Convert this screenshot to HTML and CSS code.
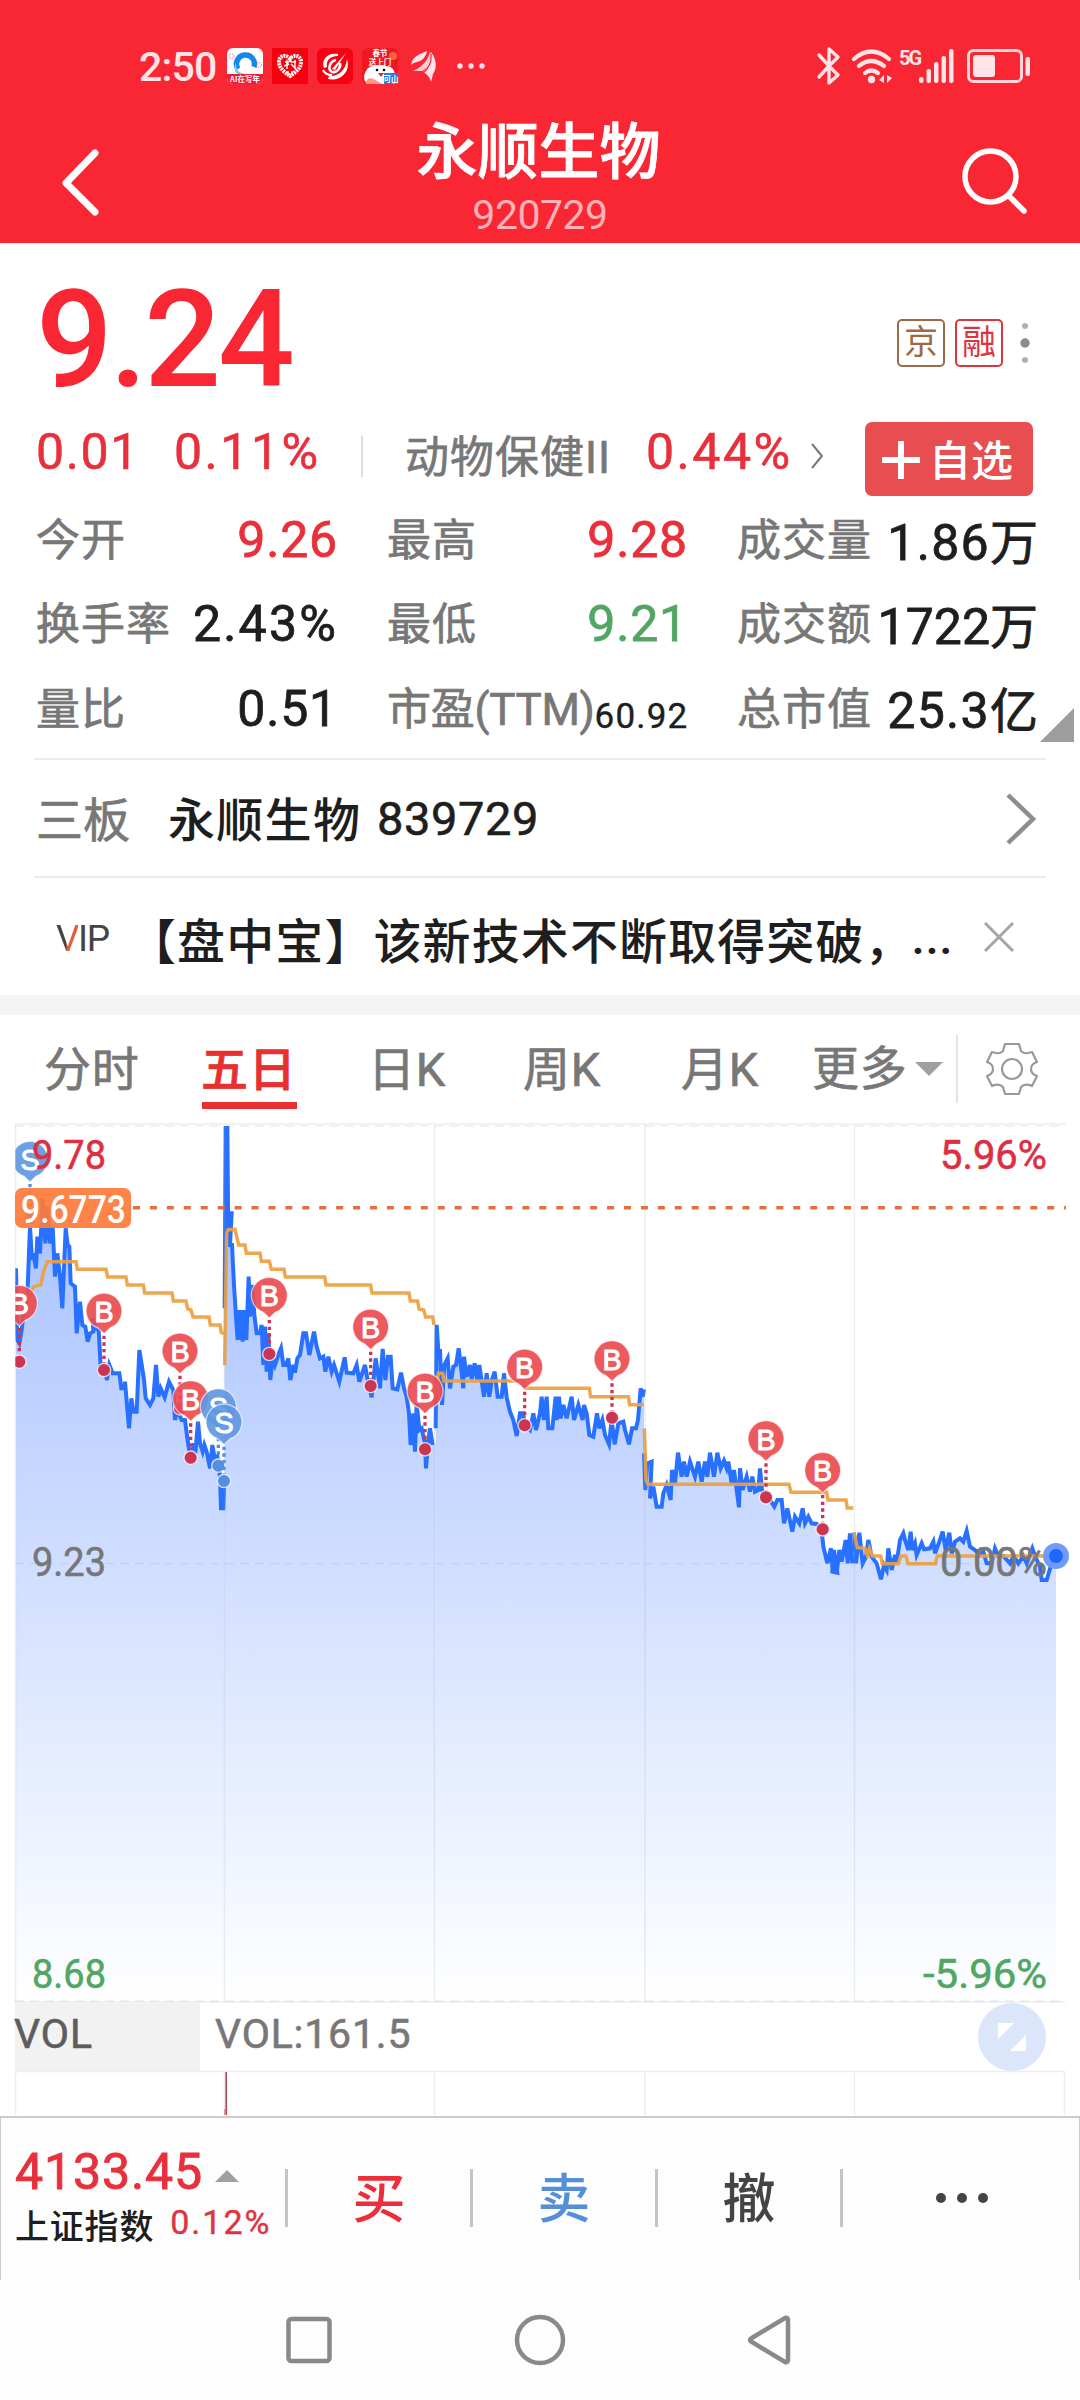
FILE: index.html
```html
<!DOCTYPE html>
<html lang="zh-CN">
<head>
<meta charset="utf-8">
<title>永顺生物 920729</title>
<link rel="stylesheet" href="styles.css">
</head>
<body>
<header class="header">
  <div class="status">
    <span class="clock">2:50</span>
    <svg class="app-icon" viewBox="0 0 36 36"><rect width="36" height="36" rx="6" fill="#fff"/><path d="M0 26H36V30a6 6 0 0 1-6 6H6a6 6 0 0 1-6-6Z" fill="#f01c35"/><path d="M11 21A9 9 0 1 1 27 19" fill="none" stroke="#1588f0" stroke-width="5.500"/><path d="M9 15c0 6 2 10 9 11h-8c-3-3-3-8-1-11Z" fill="#7cc8fa"/><circle cx="4.500" cy="8" r="2.500" fill="none" stroke="#f5a" stroke-dasharray="1 1"/><circle cx="32" cy="17" r="2.500" fill="none" stroke="#f5a" stroke-dasharray="1 1"/><text x="18" y="34" class="micro tiny">AI在写年</text></svg>
    <svg class="app-icon" viewBox="0 0 36 36"><rect width="36" height="36" fill="#f6000f"/><path d="M18 11C15 6 7 7 7 14c0 7 7 11 11 14 4-3 11-7 11-14 0-7-8-8-11-3Z" fill="none" stroke="#fff" stroke-width="4" stroke-dasharray="2 .8"/><path d="M13 14h4m2 0h5m-9-2v9m-3-3 5-2m6-4v9m-4-5 5 5m-8 2v4m4-4v4" stroke="#fff" stroke-width="1.400" fill="none"/></svg>
    <svg class="app-icon" viewBox="0 0 36 36"><rect width="36" height="36" rx="6" fill="#f90013"/><g fill="#fff"><path d="M21 6C10 4 4 12 7 20l3-1C9 13 12 8 21 8ZM30 11c4 12-6 23-19 20l1-3c9 1 17-6 18-17Z"/><path d="m29 5-11 17-3-1Z"/></g><g fill="none" stroke="#fff"><path d="M19 12c-6 1-9 9-4 12 5 1 9-4 8-9" stroke-width="2.600"/><path d="M6 22c2 4 5 5 9 5" stroke-width="2"/></g></svg>
    <svg class="app-icon" viewBox="0 0 36 36"><rect width="36" height="36" rx="6" fill="#ef1820"/><circle cx="31" cy="8" r="4" fill="#ff6042"/><path d="M2 28q3-11 10-10 6-2 12 0 8 0 9 9v9H8q-6 0-6-8" fill="#fff"/><path d="M4 36q0-8 8-5l8 5Z" fill="#ff987e"/><circle cx="15" cy="22" r="1.300"/><circle cx="22" cy="22" r="1.300"/><path d="M16 25h6l-3 4Z" fill="#d52b29"/><path d="M22 25h14v5a6 6 0 0 1-6 6h-8Z" fill="#2c79e8"/><text x="18" y="8" class="micro tiny">春节</text><text x="18" y="16.500" class="micro tiny">送上门</text><text x="29" y="33.500" class="micro tiny">可山</text></svg>
    <svg class="wing" viewBox="0 0 28 32" fill="#ffe3e6"><path d="M0 15C1 7 8 4 16 1c-1 6-5 10-10 11-3 1-4 1-6 3Z"/><path d="M2 21C13 16 17 9 19 1c3 9 0 16-8 20-3 0-6 0-9 0Z" opacity=".88"/><path d="M12 22C18 17 21 10 20 2c6 8 6 16 2 22l-2 8c-1-5-4-8-8-10Z"/><path d="M3 19C12 15 16 10 18 2M11 24c8-6 10-12 9-20" fill="none" stroke="#f92734" stroke-width="1.200"/></svg>
    <svg class="dots" viewBox="0 0 28 6" fill="#ffe3e6"><circle cx="3" cy="3" r="2.700"/><circle cx="14" cy="3" r="2.700"/><circle cx="25" cy="3" r="2.700"/></svg>
    <svg class="bt" viewBox="0 0 24 38" fill="none" stroke="#ffe3e6" stroke-width="3.400" stroke-linejoin="round" stroke-linecap="round"><path d="M2 8l10 11V2l9 8-9 9L2 30M12 22v14l9-8-7-7"/></svg>
    <svg class="wifi" viewBox="0 0 42 36" fill="none" stroke="#ffe3e6" stroke-width="4.200" stroke-linecap="round"><path d="M3 10q17-15 35 0M8 17q12-10 25 0M14 24q6-5 13 0"/><circle cx="20.500" cy="30.500" r="1.600" fill="#ffe3e6"/><path d="M28 31l5-5v8Zm8-5v8l5-5Z" fill="#ffe3e6" stroke="none"/></svg>
    <span class="five-g">5G</span>
    <svg class="signal" viewBox="0 0 36 34" fill="#ffe3e6"><rect y="28" width="4.500" height="6" rx="2"/><rect x="7.500" y="20" width="4.500" height="14" rx="2"/><rect x="15" y="13" width="4.500" height="21" rx="2"/><rect x="22.500" y="7" width="4.500" height="27" rx="2"/><rect x="30" width="4.500" height="34" rx="2"/></svg>
    <svg class="battery" viewBox="0 0 64 34"><rect x="1.500" y="1.500" width="53" height="31" rx="5" fill="none" stroke="#ffd3d8" stroke-width="3"/><rect x="6" y="6" width="22" height="22" rx="3" fill="#ffe3e6"/><rect x="58.500" y="8" width="4.500" height="19" rx="2" fill="#ffe3e6"/></svg>
  </div>
  <div class="titlebar">
    <svg class="back" viewBox="0 0 40 68" fill="none" stroke="#fff" stroke-width="7" stroke-linecap="round" stroke-linejoin="round"><path d="M34 4 5 34l29 29"/></svg>
    <div class="title"><h1>永顺生物</h1><span>920729</span></div>
    <svg class="search" viewBox="0 0 66 66" fill="none" stroke="#fff" stroke-width="5.500" stroke-linecap="round"><circle cx="28.500" cy="28.500" r="25.500"/><path d="m47 48 15 15"/></svg>
  </div>
</header>

<section class="quote">
  <div class="price-row">
    <strong class="price">9.24</strong>
    <span class="badge jing">京</span><span class="badge rong">融</span>
    <svg class="kebab" viewBox="0 0 10 42" fill="#b0b0b0"><circle cx="5" cy="4" r="3"/><circle cx="5" cy="21" r="4.700" fill="#8c8c8c"/><circle cx="5" cy="38" r="3"/></svg>
  </div>
  <div class="change-row">
    <span class="num red chg">0.01</span><span class="num red pct">0.11%</span>
    <i class="sep"></i>
    <span class="label sector">动物保健II</span>
    <span class="num red sector-pct">0.44%</span>
    <svg class="more-arrow" viewBox="0 0 14 26" fill="none" stroke="#777" stroke-width="2"><path d="m2 1 10 12L2 25"/></svg>
    <button class="add"><svg viewBox="0 0 38 38" stroke="#fff" stroke-width="6"><path d="M0 19h38M19 0v38"/></svg>自选</button>
  </div>
  <div class="stats">
    <div><span class="label">今开</span><b class="red">9.26</b></div>
    <div><span class="label">最高</span><b class="red">9.28</b></div>
    <div class="wide"><span class="label">成交量</span><b>1.86<em>万</em></b></div>
    <div><span class="label">换手率</span><b class="pc">2.43%</b></div>
    <div><span class="label">最低</span><b class="green">9.21</b></div>
    <div class="wide"><span class="label">成交额</span><b class="four">1722<em>万</em></b></div>
    <div><span class="label">量比</span><b>0.51</b></div>
    <div><span class="label ttm">市盈(TTM)</span><b class="small">60.92</b></div>
    <div class="wide"><span class="label">总市值</span><b>25.3<em>亿</em></b></div>
    <i class="corner"></i>
  </div>
  <div class="linked">
    <span class="kind">三板</span><span class="name">永顺生物</span><span class="code">839729</span>
    <svg viewBox="0 0 32 52" fill="none" stroke="#8d8d8d" stroke-width="4.500"><path d="m3 2 25 24L3 50"/></svg>
  </div>
  <div class="news">
    <span class="vip"><i>V</i>IP</span>
    <span class="headline">【盘中宝】该新技术不断取得突破，</span><span class="ell">...</span>
    <svg viewBox="0 0 30 30" stroke="#a5a5a5" stroke-width="3"><path d="m1 1 28 28M29 1 1 29"/></svg>
  </div>
</section>

<nav class="tabs">
  <span>分时</span><span class="active">五日</span><span>日K</span><span>周K</span><span>月K</span>
  <span class="more">更多<i></i></span>
  <svg viewBox="-27 -27 54 54" fill="none" stroke="#999" stroke-width="2.200" stroke-linejoin="round"><path d="M-7-25H7L9-18Q12-15 16-16L20-17 25-7Q19-5 19 0 19 5 25 7L20 17Q13 14 9 18L7 25H-7L-9 18Q-13 14-20 17L-25 7Q-19 5-19 0-19-5-25-7L-20-17-16-16Q-12-15-9-18Z"/><circle r="10"/></svg>
</nav>

<section class="chart">
  <svg viewBox="0 1110 1080 1006">
    <defs>
      <linearGradient id="fill" gradientUnits="userSpaceOnUse" x1="0" y1="45" x2="0" y2="2675"><stop stop-color="#a1bdff"/><stop offset="1" stop-color="#fff"/></linearGradient>
      <clipPath id="plot"><rect x="46" y="48" width="3200" height="2635"/></clipPath>
    </defs>
    <g id="series" transform="translate(0 1110) scale(.33333)" clip-path="url(#plot)"></g>
    <g fill="none" stroke="#8f99ad" stroke-opacity=".17" stroke-width="1.500">
      <path d="M15.500 1125V2002M224.500 1125V2002M434.500 1125V2002M645 1125V2002M854.500 1125V2002" />
      <path d="M15 1124H1066M15 2002H1065M15 2071.500H1065M15.500 2071V2115M224.500 2071V2115M434.500 2071V2115M645 2071V2115M854.500 2071V2115M1064.500 2071V2115" />
      <path d="M15 1126H1065M15 1563.500H1065M15 2001H1065" stroke-dasharray="9 6" />
    </g>
    <path d="M133 1207.700H1066" stroke="#e2703f" stroke-width="3.500" stroke-dasharray="7 9.930"/>
    <g id="marks" transform="translate(0 1110) scale(.33333)" clip-path="url(#plot)"></g>
    <circle cx="1056" cy="1556" r="13" fill="#6f9bff"/><circle cx="1056" cy="1556" r="7" fill="#1f66fb"/>
    <text x="32" y="1169" class="axis red" textLength="74" lengthAdjust="spacingAndGlyphs">9.78</text>
    <text x="940" y="1169" class="axis red" textLength="107" lengthAdjust="spacingAndGlyphs">5.96%</text>
    <rect x="15" y="1188" width="116" height="40" rx="7" fill="#ff7a3a" fill-opacity=".92"/>
    <text x="21" y="1223" class="cost" textLength="105" lengthAdjust="spacingAndGlyphs">9.6773</text>
    <text x="32" y="1576" class="axis gray" textLength="74" lengthAdjust="spacingAndGlyphs">9.23</text>
    <text x="940" y="1576" class="axis gray" textLength="107" lengthAdjust="spacingAndGlyphs">0.00%</text>
    <text x="32" y="1988" class="axis green" textLength="74" lengthAdjust="spacingAndGlyphs">8.68</text>
    <text x="923" y="1988" class="axis green" textLength="124" lengthAdjust="spacingAndGlyphs">-5.96%</text>
    <rect x="15" y="2003" width="185" height="68" fill="#f2f2f2"/>
    <text x="14" y="2048" class="axis vol">VOL</text>
    <text x="215" y="2048" class="axis gray spaced">VOL:161.5</text>
    <path d="M226.200 2072V2115" stroke="#a83a4a" stroke-width="1.500"/><path d="M224.500 2109v6" stroke="#e88" />
    <circle cx="1012" cy="2037" r="34" fill="#dce6fb"/>
    <path d="M998 2023h16l-16 16ZM1026 2035v16h-16Z" fill="#fff"/>
  </svg>
</section>

<footer class="trade">
  <div class="index">
    <div class="idx-top">4133.45<i></i></div>
    <div class="idx-sub">上证指数<span>0.12%</span></div>
  </div>
  <a class="red">买</a><a class="sell">卖</a><a>撤</a>
  <a><svg viewBox="0 0 54 12" fill="#444"><circle cx="6" cy="6" r="5"/><circle cx="27" cy="6" r="5"/><circle cx="48" cy="6" r="5"/></svg></a>
</footer>
<div class="sysnav">
  <svg viewBox="0 0 54 54"><rect x="6.500" y="6" width="41" height="42" rx="3"/></svg>
  <svg viewBox="0 0 54 54"><circle cx="27" cy="27" r="23"/></svg>
  <svg viewBox="0 0 54 54"><path d="M7 25.500 41 5q3-1 3 2v40q0 3-3 2L7 28.500q-2-1.500 0-3Z"/></svg>
</div>
<script src="chart.js"></script>
</body>
</html>
```
FILE: styles.css
```css
* { box-sizing: border-box; }
body { margin: 0; width: 1080px; height: 2400px; overflow: hidden; background: #fff; color: #1e1e1e;
  font-family: Roboto, "Noto Sans CJK SC", sans-serif; white-space: nowrap; }
svg { display: block; flex: none; overflow: visible; }
i, em { font-style: normal; }
.red { color: #e8303c; fill: #dc3042; }
.green { color: #52a663; fill: #52a663; }

.header { height: 243px; background: #f92734; color: #fff; }
.status { height: 112px; padding: 19px 0 0 139px; display: flex; align-items: center; }
.clock { font-size: 41px; font-weight: 500; line-height: 50px; width: 88px; margin-top: 2px; color: #ffe3e6; letter-spacing: -.8px; }
.app-icon { width: 36px; height: 36px; margin-right: 9px; }
.micro { font: 700 9px "Noto Sans CJK SC", sans-serif; fill: #fff; text-anchor: middle; }
.tiny { font-size: 7.500px; }
.wing { width: 28px; height: 32px; margin-left: 4px; }
.dots { width: 28px; height: 6px; margin: 0 auto 0 18px; }
.bt { width: 24px; height: 38px; }
.wifi { width: 42px; height: 36px; margin: 2px 0 0 10px; }
.five-g { font-size: 20px; line-height: 20px; font-weight: 700; margin: 0 0 15px 6px; width: 20px; letter-spacing: -2px; color: #ffe3e6; }
.signal { width: 36px; height: 34px; }
.battery { width: 64px; height: 34px; margin: 0 49px 0 12px; }
.titlebar { height: 131px; display: flex; align-items: flex-start; justify-content: space-between; padding: 0 52px 0 61px; }
.back { width: 40px; height: 68px; margin-top: 37px; }
.search { width: 66px; height: 66px; margin-top: 36px; }
.title { display: flex; flex-direction: column; align-items: center; padding-left: 14px; }
.title h1 { margin: 7px 0 0; font-size: 61px; line-height: 68px; font-weight: 500; -webkit-text-stroke: .8px; }
.title span { font-size: 41px; line-height: 46px; color: #ffb1b8; margin-top: 5px; letter-spacing: -.5px; padding-left: 3px; }

.quote { height: 752px; }
.price-row { height: 179px; padding: 0 50px 0 36px; display: flex; align-items: center; }
.price { font-size: 135px; line-height: 136px; font-weight: 500; color: #f92734; margin: 15px auto 0 0; letter-spacing: -3px; }
.badge { width: 48px; height: 48px; border: 2px solid; border-radius: 5px; margin: 21px 10px 0 0; font-size: 34px; line-height: 43px; text-align: center; }
.jing { color: #9c6a45; }
.rong { color: #dd3440; margin-right: 17px; }
.kebab { width: 10px; height: 42px; margin-top: 20px; }
.change-row { height: 74px; padding-left: 36px; display: flex; align-items: center; }
.num { font-size: 50px; line-height: 50px; margin-bottom: 14px; letter-spacing: 1.600px; -webkit-text-stroke: .6px; }
.chg { width: 138px; }
.pct { width: 187px; letter-spacing: 2.500px; }
.sep { width: 2px; height: 41px; background: #ddd; margin-bottom: 6px; }
.label { font-size: 44px; line-height: 50px; color: #777; letter-spacing: 1px; -webkit-text-stroke: .7px; }
.sector { margin: 0 0 2px 42px; width: 241px; }
.sector-pct { letter-spacing: 2.500px; width: 164px; }
.more-arrow { width: 14px; height: 26px; margin-bottom: 6px; }
.add { width: 168px; height: 74px; margin-left: 41px; border: 0; border-radius: 7px; padding: 0 0 3px 17px; background: #e84d50; color: #fff; font: 500 42px/60px "Noto Sans CJK SC", sans-serif; display: flex; align-items: center; }
.add svg { width: 38px; height: 38px; margin: 5px 9px 0 0; }
.stats { height: 262px; padding: 1px 0 0 36px; display: grid; grid-template-columns: 351px 350px 343px; grid-template-rows: repeat(3, 84.300px); position: relative; }
.stats div { display: flex; align-items: center; justify-content: space-between; padding-right: 49px; }
.stats .wide { padding-right: 42px; }
.stats .label { margin-top: 4px; }
.stats .ttm { letter-spacing: -.3px; }
.stats b { font-size: 50px; line-height: 50px; font-weight: 400; letter-spacing: .8px; margin-top: 2px; -webkit-text-stroke: .8px; }
.stats b.pc { letter-spacing: 2.200px; }
.stats .wide b { margin-top: 8px; letter-spacing: 1.300px; }
.stats .wide b.four { letter-spacing: 0; }
.stats .wide em { font-size: 48px; letter-spacing: 0; }
.stats b.small { font-size: 35px; margin-top: 18px; letter-spacing: 1.200px; -webkit-text-stroke: .4px; }
.corner { position: absolute; right: 6px; bottom: 16px; border-left: 34px solid transparent; border-bottom: 34px solid #9d9d9d; }
.linked, .news { height: 118px; margin: 0 34px; border-top: 2px solid #ebebeb; display: flex; align-items: center; }
.linked span { line-height: 50px; font-size: 47px; }
.linked .kind { color: #777; width: 134px; padding-left: 2px; margin-top: 5px; -webkit-text-stroke: .7px; }
.linked .name { width: 209px; letter-spacing: 1.300px; font-weight: 500; margin-top: 5px; }
.linked .code { letter-spacing: .6px; margin-top: 2px; -webkit-text-stroke: .6px; }
.linked svg { width: 32px; height: 52px; margin: 2px 9px 0 auto; }
.vip { font-size: 37px; line-height: 40px; width: 72px; margin: 5px 0 0 22px; color: #444; letter-spacing: -1.500px; }
.vip i { background: linear-gradient(90deg, #444 45%, #e0603f 50%); -webkit-background-clip: text; background-clip: text; color: transparent; }
.headline { font: 500 48px/50px "Noto Sans CJK SC", sans-serif; letter-spacing: 1.100px; margin-top: 3px; }
.ell { font-size: 48px; line-height: 50px; margin: 3px 0 0 -2px; letter-spacing: .5px; font-weight: 500; }
.news svg { width: 30px; height: 30px; margin: 1px 32px 0 auto; }

.tabs { height: 115px; border-top: 20px solid #f4f4f4; padding-left: 44px; display: grid; grid-template-columns: 157px 167px 155px 158px 131px 146px 1fr; color: #777; font-size: 47px; letter-spacing: .7px; -webkit-text-stroke: .7px; }
.tabs span { height: 95px; line-height: 110px; }
.tabs .active { color: #e83030; font-weight: 500; background: linear-gradient(#e83030, #e83030) 1px 87px / 95px 7px no-repeat; }
.tabs .more { border-right: 2px solid #e4e4e4; height: 68px; margin-top: 20px; line-height: 68px; display: flex; align-items: center; }
.more i { border: 14px solid transparent; border-top-color: #a0a0a0; border-bottom: 0; margin: -1px 0 0 8px; }
.tabs svg { width: 54px; height: 54px; margin: 27px 0 0 27px; }

.chart { height: 1006px; }
.chart > svg { width: 1080px; height: 1006px; }
.axis { font: 41px Roboto, sans-serif; stroke-width: .6px; }
.axis.red { stroke: #dc3042; }
.axis.green { stroke: #52a663; }
.gray { fill: #777; stroke: #777; }
.vol { fill: #5d5d5d; stroke: #5d5d5d; letter-spacing: 1px; }
.spaced { letter-spacing: .8px; }
.cost { font: 500 38px Roboto, sans-serif; fill: #fff; }
.letter { font: 500 86px "Liberation Sans", sans-serif; fill: #fff; stroke: #fff; stroke-width: 3px; text-anchor: middle; }

.trade { height: 164px; border: 2px solid #ccc; border-width: 2px 1px 0; background: #fdfdfd; display: flex; }
.index { width: 284px; padding: 31px 0 0 14px; }
.idx-top { font-size: 50px; line-height: 46px; color: #e8303c; letter-spacing: .9px; -webkit-text-stroke: .9px; display: flex; align-items: center; }
.idx-top i { border: 12px solid transparent; border-top: 0; border-bottom-color: #a0a0a0; margin: 8px 0 0 12px; }
.idx-sub { font-size: 34px; line-height: 46px; font-weight: 500; letter-spacing: .8px; margin-top: 9px; display: flex; }
.idx-sub span { color: #dc3440; font-weight: 400; margin: -5px 0 0 16px; letter-spacing: 2px; -webkit-text-stroke: .4px; }
.trade a { width: 185px; height: 58px; margin-top: 51px; border-left: 3px solid #c4c4c4; font-size: 53px; line-height: 62px; font-weight: 500; text-align: center; color: #444; }
.trade a.red { color: #ee2d3a; }
.trade a.sell { color: #568fd8; }
.trade a:last-child { width: 236px; padding: 23px 0 0 92px; }
.trade a svg { width: 54px; height: 12px; }
.sysnav { height: 120px; background: #fdfdfd; display: flex; justify-content: center; align-items: center; gap: 177px; }
.sysnav svg { width: 54px; height: 54px; fill: none; stroke: #898989; stroke-width: 4.500; }
```
FILE: chart.js
```js
// Series points are in thirds of a pixel; "dx, dy" shifts each run into place.
const price = [
  [[0, 0, "48,475 52,690 58,700 65,660 72,600 82,560 90,350 96,450 100,430 108,475 112,380 120,430 128,265 136,400 142,290 150,400 158,350 165,500 172,430 180,500 187,595 197,355 203,405 208,410 212,520 225,530 230,670 240,575 247,645 256,650 263,695 270,670 280,665 278,625 288,655 296,660 302,770 315,780 321,810 328,765 338,790 358,790 364,835 374,835 375,815 387,955 394,865 400,905 410,905 418,720 426,770 432,810 437,865 450,885 460,865 468,765 475,860 482,835 494,862 507,815 520,840 525,930 532,900 545,930 555,930 562,985 572,1050 582,1000 586,1030 594,935 600,1000 608,1025 613,1005 620,1025 630,1075 637,1005 645,1050 652,1040 660,1100 663,1195 670,1195 673,1100"]],
  [[600, 0, "74,595 77,48 82,48 85,400 88,310 95,310 90,405 96,405 102,525 108,620 113,690 118,600 121,690 125,600 128,695 132,600 139,690 146,500 150,620 157,525 163,615 170,670 180,670 185,645 190,765 195,650 200,785 205,670 211,810 218,740 225,765 235,735 243,715 250,765 258,765 265,745 271,810 280,765 285,788 292,745 300,735 310,670 318,670 328,735 342,665 350,710 360,745 370,740 376,785 385,740 395,785 402,765 418,815 434,742 440,788 460,790 470,765 478,815 495,765 503,810 515,862 527,745 540,835 548,717 556,810 564,740 572,740 578,835 592,838 603,788 612,835 620,860 627,910 632,1005 640,910 645,1025 650,880 658,960 665,955 675,1000 678,1075 684,1000 690,955 698,1005"]],
  [[600, 0, "707,955 710,645 716,740 720,717 726,885 733,765 743,745 750,835 760,770 768,765 776,715 785,790 790,835 792,740 800,800 810,765 815,808 824,760 832,810 838,765 852,860 860,790 868,860 875,812 884,785 893,860 905,860 912,790 920,862 930,905 940,930 950,978 960,910 970,910 974,945 990,960 1000,910 1008,960 1020,910"],
   [1620, 420, "5,440 12,510 20,440 25,535 37,535 47,440 50,510 57,440 62,505 70,465 80,505 95,440 102,510 115,465 128,510 132,465 140,490 148,555 160,560 171,490 178,535 187,510 195,555 207,583 215,510 224,583 235,520 250,515 255,540 267,583 276,535 288,535 294,510 302,415 308,440 312,418"]],
  [[1620, 420, "312,610 316,720 322,640 335,635 330,745 340,710 350,770 365,770 370,730 380,705 392,750 396,660 405,700 414,608 425,680 432,635 440,680 450,635 465,680 475,635 485,695 495,635 502,680 510,608 522,680 532,608 542,655 552,632 560,655 565,635 575,700 582,660 590,720 597,772 600,655 608,720 620,680 630,725 637,680 645,725 655,720 660,655 666,720 680,745 690,750 703,770 712,750 725,750 732,820 742,775 757,845 765,800 778,820 788,775 795,820 805,800 815,820 830,822 845,840 850,890 862,940 873,895 878,965 885,920 892,968"],
   [2340, 870, "157,515 162,450 170,520 178,450 185,485 197,420 203,490 210,400 217,490"]],
  [[2340, 870, "222,398 228,490 238,398 248,490 258,470 265,420 275,470 290,490 303,538 312,495 320,510 325,445 335,510 345,465 350,490 360,420 370,400 375,420 385,450 392,395 397,450 405,430 410,465 425,430 432,448 450,445 460,425 465,460 478,425 488,395 497,450 508,398 515,460 525,425 540,415 550,425 560,393 570,440 585,450 600,465 610,455 620,490 635,490 645,445 655,468 670,468 690,490 700,468 715,490 730,468 740,490 757,445 765,468 780,500 785,540 800,540 812,500 828,468"]]
];
const average = [
  [[0, 0, "48,565 88,560 100,530 122,525 132,480 142,455 228,455 232,478 318,478 323,501 378,501 382,525 430,525 434,549 516,549 520,573 558,573 563,597 573,600 579,621 627,621 631,645 660,645 664,668 672,670"]],
  [[600, 0, "74,765 80,370 84,359 105,358 116,405 135,405 139,430 180,430 184,454 208,454 214,478 252,478 256,501 374,501 378,525 512,525 516,549 627,549 631,573 653,573 657,597 671,600 677,621 698,621 702,645"]],
  [[600, 0, "706,860 715,790 728,790 732,813 970,813 975,835 1020,835"], [1620, 420, "0,415 148,415 152,440 265,440 269,464 312,464"]],
  [[1620, 420, "313,535 318,690 324,703 747,703 753,727 860,727 864,750 918,750 922,774 940,774"]],
  [[2340, 870, "222,398 232,443 255,445 262,465 268,445 277,468 302,468 307,491 355,491 362,468 378,468 384,491 466,491 472,468 828,468"]]
];
const marks = [
  ["S", 90, 150, 325], ["B", 58, 582, 755], ["B", 312, 605, 780], ["B", 540, 725, 895], ["B", 572, 868, 1043],
  ["S", 655, 892, 1067], ["S", 672, 938, 1113], ["B", 808, 558, 732], ["B", 1112, 653, 828], ["B", 1275, 845, 1018],
  ["B", 1574, 773, 946], ["B", 1836, 748, 923], ["B", 2298, 988, 1162], ["B", 2468, 1083, 1258]
];

const points = runs => runs.flatMap(([dx, dy, text]) => text.split(" ").map(p => {
  const [x, y] = p.split(",").map(Number);
  return [x + dx, y + dy];
}));
const path = pts => "M" + pts.map(p => p.join(" ")).join("L");

let out = "";
const days = price.map(points);
days.forEach((d, i) => {
  const right = i < 4 ? days[i + 1][0][0] : d[d.length - 1][0];
  out += `<path d="${path(d)}H${right}V2675H${d[0][0]}Z" fill="url(#fill)"/>`;
});
days.forEach(d => { out += `<path d="${path(d)}" fill="none" stroke="#2870ff" stroke-width="12"/>`; });
average.forEach(a => { out += `<path d="${path(points(a))}" fill="none" stroke="#ed9f40" stroke-opacity=".92" stroke-width="10.500"/>`; });
document.getElementById("series").innerHTML = out;

document.getElementById("marks").innerHTML = marks.map(([kind, x, y, end]) => {
  const pin = kind === "B" ? "#ec4c50" : "#6197e2";
  const dot = kind === "B" ? "#cb3553" : "#568ee0";
  return `<path d="M${x} ${y + 72}V${end - 20}" stroke="${dot}" stroke-width="10" stroke-dasharray="10 10"/>
    <circle cx="${x}" cy="${end}" r="20" fill="${dot}" stroke="#fff" stroke-opacity=".75" stroke-width="4"/>
    <path d="M${x - 18} ${y + 49}L${x} ${y + 66} ${x + 18} ${y + 49}A54 54 0 1 0 ${x - 18} ${y + 49}Z" fill="${pin}" fill-opacity=".92" stroke="#fff" stroke-opacity=".6" stroke-width="4"/>
    <text class="letter" x="${x}" y="${y + 31}">${kind}</text>`;
}).join("");
```
